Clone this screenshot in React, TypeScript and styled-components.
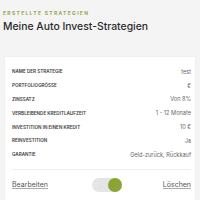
import React from 'react';
import styled, { createGlobalStyle } from 'styled-components';

const Global = createGlobalStyle`
  html, body {
    margin: 0;
    padding: 0;
    background: #f4f4f4;
    font-family: "Inter", "Noto Sans", sans-serif;
  }
`;

interface Row {
  label: string,
  value: string
}

const rows: Row[] = [
  {label: 'Name der Strategie', value: 'test'},
  {label: 'Portfoliogröße', value: '€'},
  {label: 'Zinssatz', value: 'Von 8%'},
  {label: 'Verbleibende Kreditlaufzeit', value: '1 - 12 Monate'},
  {label: 'Investition in einen Kredit', value: '10 €'},
  {label: 'Reinvestition', value: 'Ja'},
  {label: 'Garantie', value: 'Geld-zurück, Rückkauf'},
];

function App() {
  return (
    <Page>
      <Global />
      <Eyebrow>Erstellte Strategien</Eyebrow>
      <Title>Meine Auto Invest-Strategien</Title>
      <Card>
        <Table>
          {rows.map((r, i) => (
            <TableRow key={i}>
              <Label>{r.label}</Label>
              <Value>{r.value}</Value>
            </TableRow>
          ))}
        </Table>
        <Footer>
          <Link href="#">Bearbeiten</Link>
          <Toggle on><Knob /></Toggle>
          <Link href="#">Löschen</Link>
        </Footer>
      </Card>
    </Page>
  );
}

const Page = styled.div`
  width: 200px;
  height: 200px;
  overflow: hidden;
  padding: 10px 4px 0;
  box-sizing: border-box;
`;

const Eyebrow = styled.div`
  font-size: 5px;
  font-weight: 700;
  letter-spacing: 1.3px;
  text-transform: uppercase;
  color: #94a94e;
  line-height: 7px;
  margin-left: -1px;
`;

const Title = styled.h1`
  margin: 3px 0 0 -1px;
  font-size: 10.4px;
  font-weight: 500;
  color: #2b2b2b;
  line-height: 14px;
`;

const Card = styled.div`
  margin-top: 22px;
  background: #fff;
  border: 1px solid #efefef;
  padding: 0 4px 0 7px;
`;

const Table = styled.div`
  padding: 8px 0 7px;
  border-bottom: 1px solid #efefef;
`;

const TableRow = styled.div`
  display: flex;
  justify-content: space-between;
  align-items: center;
  height: 13.8px;
`;

const Label = styled.div`
  font-size: 4.6px;
  font-weight: 600;
  text-transform: uppercase;
  color: #3a3a3a;
`;

const Value = styled.div`
  font-size: 5.6px;
  color: #666;
`;

const Footer = styled.div`
  display: flex;
  justify-content: space-between;
  align-items: center;
  padding: 8px 0;
`;

const Link = styled.a`
  font-size: 7px;
  color: #555;
  text-decoration: underline;
  text-decoration-color: #aaa;
`;

const Toggle = styled.div<{on?: boolean}>`
  width: 30px;
  height: 14px;
  border-radius: 7px;
  background: #e5e5e5;
  display: flex;
  align-items: center;
  justify-content: ${p => p.on ? 'flex-end' : 'flex-start'};
  margin-left: 4px;
`;

const Knob = styled.div`
  width: 14px;
  height: 14px;
  border-radius: 50%;
  background: #8aa534;
`;

export default App;
